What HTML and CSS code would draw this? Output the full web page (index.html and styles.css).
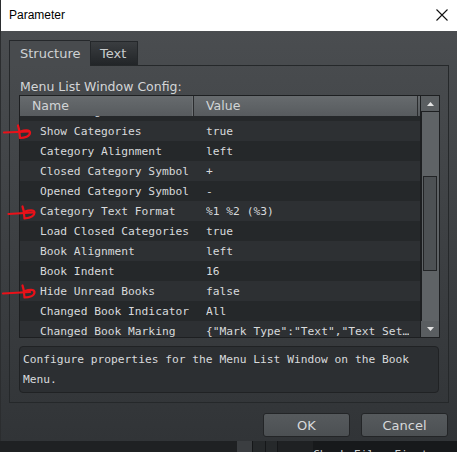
FILE: index.html
```html
<!DOCTYPE html>
<html>
<head>
<meta charset="utf-8">
<link rel="stylesheet" href="styles.css">
</head>
<body>
<div class="dialog">
  <div class="titlebar">
    <span class="title">Parameter</span>
    <svg class="close" width="12" height="12" viewBox="0 0 12 12"><path d="M0.5 0.5 L11.5 11.5 M11.5 0.5 L0.5 11.5" stroke="#111" stroke-width="1.1" fill="none"/></svg>
  </div>
  <div class="client">
    <div class="tabs">
      <div class="tab active">Structure</div>
      <div class="tab">Text</div>
    </div>
    <div class="panel">
      <div class="caption">Menu List Window Config:</div>
      <div class="table">
        <div class="main">
          <div class="head">
            <div class="hcell name">Name</div>
            <div class="hcell value">Value</div>
          </div>
          <div class="viewport">
            <div class="list">
              <div class="row odd"><span class="k">Text Alignment</span><span class="v">left</span></div>
              <div class="row"><span class="k">Show Categories</span><span class="v">true</span></div>
              <div class="row odd"><span class="k">Category Alignment</span><span class="v">left</span></div>
              <div class="row"><span class="k">Closed Category Symbol</span><span class="v">+</span></div>
              <div class="row odd"><span class="k">Opened Category Symbol</span><span class="v">-</span></div>
              <div class="row"><span class="k">Category Text Format</span><span class="v">%1 %2 (%3)</span></div>
              <div class="row odd"><span class="k">Load Closed Categories</span><span class="v">true</span></div>
              <div class="row"><span class="k">Book Alignment</span><span class="v">left</span></div>
              <div class="row odd"><span class="k">Book Indent</span><span class="v">16</span></div>
              <div class="row"><span class="k">Hide Unread Books</span><span class="v">false</span></div>
              <div class="row odd"><span class="k">Changed Book Indicator</span><span class="v">All</span></div>
              <div class="row"><span class="k">Changed Book Marking</span><span class="v">{"Mark Type":"Text","Text Set…</span></div>
            </div>
          </div>
        </div>
        <div class="scrollbar">
          <div class="sbtn"><svg width="7" height="4" viewBox="0 0 7 4"><path d="M0 4 L3.5 0 L7 4 Z" fill="#e4e4e4"/></svg></div>
          <div class="track">
            <div class="thumb"></div>
          </div>
          <div class="sbtn"><svg width="7" height="4" viewBox="0 0 7 4"><path d="M0 0 L7 0 L3.5 4 Z" fill="#e4e4e4"/></svg></div>
        </div>
      </div>
      <div class="desc">Configure properties for the Menu List Window on the Book Menu.</div>
    </div>
    <div class="buttons">
      <div class="btn">OK</div>
      <div class="btn">Cancel</div>
    </div>
  </div>
</div>
<div class="behind">
  <div class="bcol b1"></div>
  <div class="bcol b2"></div>
  <div class="bcol b3"></div>
  <div class="btext">Check Files First</div>
</div>
<svg class="marks" width="40" height="452" viewBox="0 0 40 452">
  <g stroke="#ea1119" stroke-width="2.2" fill="none" stroke-linecap="round" stroke-linejoin="round">
    <path d="M4 132.5 L29 131.5"/>
    <path d="M18 125.5 C19.5 129.5 19.5 134 20 138 C24.5 138 30 136.5 30 132.5 C29.5 129.5 24.5 130 20.5 131.5"/>
    <path d="M8.5 214 L33 212.5"/>
    <path d="M22.5 206.5 C24 210.5 24 214.5 24.5 218.5 C29 218 34.5 216.5 34.5 212.5 C34 209.5 29 210 25 211.5"/>
    <path d="M3 293.5 L30 292"/>
    <path d="M22.5 285.5 C24 289.5 24 293.5 24.5 297.5 C29 297.5 34.5 296 34.5 292 C34 289 29 289.5 25 291"/>
  </g>
</svg>
</body>
</html>
```

FILE: styles.css
```css
html, body {
  margin: 0;
  padding: 0;
}

body {
  width: 457px;
  height: 452px;
  overflow: hidden;
  background: #1c1e20;
  position: relative;
  font-family: "DejaVu Sans", sans-serif;
}

.dialog {
  width: 457px;
  height: 441px;
  display: flex;
  flex-direction: column;
  box-sizing: border-box;
  border-left: 1px solid #2b2d2f;
}

/* window caption */
.titlebar {
  height: 31px;
  flex: none;
  background: #ffffff;
  display: flex;
  align-items: center;
  justify-content: space-between;
  padding: 0 9px 0 8px;
}

.title {
  font-family: "Liberation Sans", sans-serif;
  font-size: 12px;
  color: #000;
  margin-top: -1px;
}

.close {
  display: block;
  margin-top: -1px;
}

/* client area */
.client {
  flex: 1;
  background: linear-gradient(#4a4d50, #313437);
  display: flex;
  flex-direction: column;
}

.tabs {
  display: flex;
  align-items: flex-end;
  padding: 9px 0 0 8px;
  height: 25px;
  position: relative;
  z-index: 1;
}

.tab {
  box-sizing: border-box;
  height: 24px;
  padding: 0 9px;
  font-size: 13px;
  color: #c9ccce;
  display: flex;
  align-items: center;
  border: 1px solid #24272a;
  border-bottom: none;
  background: linear-gradient(#3a3d40, #222528);
}

.tab.active {
  height: 26px;
  margin-bottom: -1px;
  width: 81px;
  padding-left: 10px;
  background: #484b4e;
  color: #cfd2d4;
  border-right: none;
  border-color: #25282b;
}

.tab:not(.active) {
  width: 48px;
}

.panel {
  margin-left: 8px;
  width: 440px;
  height: 338px;
  box-sizing: border-box;
  border: 1px solid #25282a;
  display: flex;
  flex-direction: column;
  padding: 0 0 0 9px;
}

.caption {
  height: 29px;
  box-sizing: border-box;
  padding: 13px 0 0 1px;
  font-size: 12.5px;
  line-height: 16px;
  color: #d4d6d8;
}

.table {
  width: 421px;
  height: 243px;
  box-sizing: border-box;
  border: 1px solid #1d1f21;
  display: flex;
  background: #1d1f21;
}

.main {
  width: 401px;
  display: flex;
  flex-direction: column;
}

.head {
  height: 20px;
  display: flex;
  background: linear-gradient(#676b6e, #575b5e);
}

.hcell {
  font-size: 12.5px;
  color: #d2d5d7;
  line-height: 20px;
  box-sizing: border-box;
  padding-left: 12px;
}

.hcell.name {
  width: 174px;
  border-right: 1px solid #2a2c2e;
  box-shadow: inset -1px 0 0 #6e7275;
}

.hcell.value {
  flex: 1;
  border-right: 1px solid #2a2c2e;
  margin-right: 2px;
}

.viewport {
  flex: 1;
  overflow: hidden;
  background: #25282a;
}

/* list is scrolled a few pixels into its first entry */
.list {
  margin-top: -15px;
}

.row {
  height: 20px;
  display: flex;
  align-items: center;
  background: #2d3033;
  font-family: "DejaVu Sans Mono", monospace;
  font-size: 11.25px;
  color: #d8dadc;
  white-space: nowrap;
}

.row.odd {
  background: #25282a;
}

.row .k {
  box-sizing: border-box;
  width: 186px;
  padding-left: 20px;
  flex: none;
}

.row .v {
  overflow: hidden;
}

/* vertical scroll bar */
.scrollbar {
  width: 18px;
  margin-left: 1px;
  display: flex;
  flex-direction: column;
  background: #1d1f21;
}

.sbtn {
  height: 16px;
  box-sizing: border-box;
  background: #5a5e61;
  display: flex;
  align-items: center;
  justify-content: center;
}

.sbtn:first-child {
  border-bottom: 1px solid #1d1f21;
}

.track {
  flex: 1;
  background: #5f6366;
  padding-top: 64px;
  margin-left: 1px;
}

.thumb {
  margin: 0 2px 0 1px;
  height: 95px;
  box-sizing: border-box;
  border: 1px solid #222426;
  background: #4d5154;
}

.desc {
  margin-top: 8px;
  width: 420px;
  height: 47px;
  box-sizing: border-box;
  border: 1px solid #202224;
  border-radius: 4px;
  background: #2c2f32;
  padding: 3px 3px 0 3px;
  font-family: "DejaVu Sans Mono", monospace;
  font-size: 11.25px;
  line-height: 20px;
  color: #d8dadc;
}

.buttons {
  display: flex;
  justify-content: flex-end;
  gap: 11px;
  padding: 10px 9px 0 0;
}

.btn {
  width: 87px;
  height: 24px;
  box-sizing: border-box;
  border: 1px solid #232527;
  border-radius: 3px;
  background: linear-gradient(#565a5d, #4c5053);
  font-size: 13px;
  color: #d7d9db;
  display: flex;
  align-items: center;
  justify-content: center;
}

/* window underneath */
.behind {
  height: 11px;
  display: flex;
  background: #1f2123;
  overflow: hidden;
}

.bcol {
  height: 11px;
}

.b1 { margin-left: 237px; width: 15px; background: #3b3e41; }
.b2 { width: 12px; border-left: 1px solid #151719; background: #26292b; }
.b3 { width: 11px; border-left: 1px solid #151719; background: #26292b; border-right: 1px solid #151719; }

.btext {
  margin-left: 35px;
  padding-top: 6px;
  font-family: "DejaVu Sans Mono", monospace;
  font-size: 11.25px;
  line-height: 16px;
  color: #cfd2d4;
  background: #17191b;
  flex: 1;
}

/* hand-drawn pointers in the left margin */
.marks {
  position: absolute;
  left: 0;
  top: 0;
}
```
